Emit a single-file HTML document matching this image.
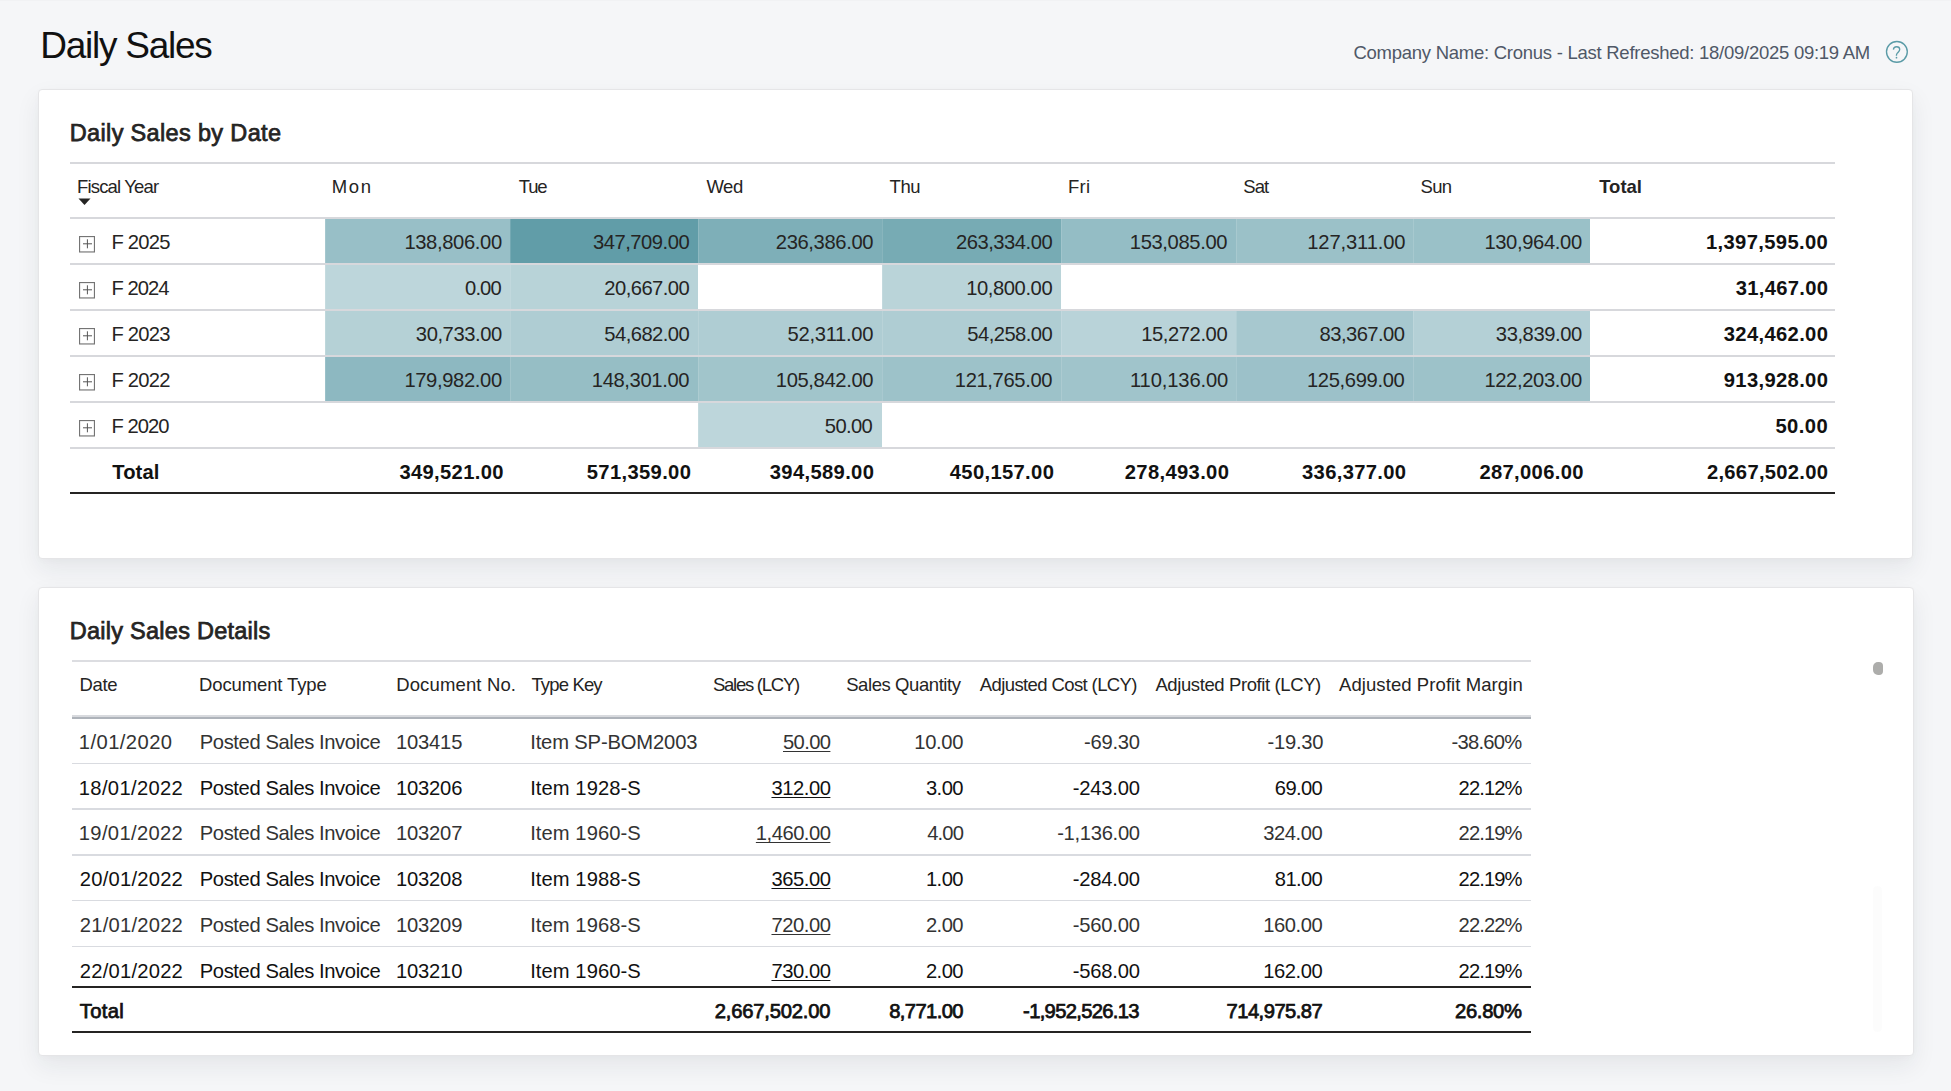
<!DOCTYPE html>
<html><head><meta charset="utf-8"><title>Daily Sales</title>
<style>
html,body{margin:0;padding:0;}
body{width:1951px;height:1091px;background:#f5f6f8;position:relative;overflow:hidden;font-family:"Liberation Sans",sans-serif;}
.t{position:absolute;line-height:0;white-space:nowrap;}
.r{position:absolute;}
.card{position:absolute;box-sizing:border-box;background:#fff;border:1px solid #e5e5e7;border-radius:4px;box-shadow:0 10px 24px rgba(30,35,50,0.075),0 2px 6px rgba(0,0,0,0.02);}
</style></head><body>
<div class="r" style="left:0.00px;top:0.00px;width:1951.00px;height:1.00px;background:rgba(0,0,0,0.015);"></div>
<svg class="r" style="left:1875px;top:35px;width:45px;height:35px" viewBox="0 0 45 35"><circle cx="21.9" cy="16.85" r="10.4" fill="none" stroke="#5a9ba7" stroke-width="1.35"/><path d="M18.4 14.6C18.5 12.7 19.9 11.7 21.6 11.7C23.4 11.7 24.7 12.9 24.7 14.5C24.7 16.1 23.5 16.8 22.5 17.9C21.7 18.8 21.4 19.5 21.4 20.7" fill="none" stroke="#5a9ba7" stroke-width="1.35"/><circle cx="21.5" cy="22.7" r="0.85" fill="#5a9ba7"/></svg>
<div class="card" style="left:38px;top:89px;width:1875px;height:470px"></div>
<div class="card" style="left:38px;top:587px;width:1876px;height:469px"></div>
<div class="r" style="left:70.00px;top:162.00px;width:1765.00px;height:2.00px;background:#d7d8dc;"></div>
<div class="r" style="left:70.00px;top:217.00px;width:1765.00px;height:2.00px;background:#d7d8dc;"></div>
<svg class="r" style="left:78px;top:198px;width:13px;height:8px" viewBox="0 0 13 8"><path d="M0.5 0.5h12L6.5 7z" fill="#252423"/></svg>
<div class="r" style="left:325.00px;top:219.00px;width:185.40px;height:44.00px;background:#98bfc7;box-shadow:inset 1px 0 0 rgba(255,255,255,0.13)"></div>
<div class="r" style="left:510.40px;top:219.00px;width:187.60px;height:44.00px;background:#619da8;box-shadow:inset 1px 0 0 rgba(255,255,255,0.13)"></div>
<div class="r" style="left:698.00px;top:219.00px;width:183.50px;height:44.00px;background:#7eafb8;box-shadow:inset 1px 0 0 rgba(255,255,255,0.13)"></div>
<div class="r" style="left:881.50px;top:219.00px;width:179.50px;height:44.00px;background:#77abb4;box-shadow:inset 1px 0 0 rgba(255,255,255,0.13)"></div>
<div class="r" style="left:1061.00px;top:219.00px;width:175.00px;height:44.00px;background:#94bdc5;box-shadow:inset 1px 0 0 rgba(255,255,255,0.13)"></div>
<div class="r" style="left:1236.00px;top:219.00px;width:177.30px;height:44.00px;background:#9bc1c8;box-shadow:inset 1px 0 0 rgba(255,255,255,0.13)"></div>
<div class="r" style="left:1413.30px;top:219.00px;width:177.10px;height:44.00px;background:#9ac1c8;box-shadow:inset 1px 0 0 rgba(255,255,255,0.13)"></div>
<div class="r" style="left:70.00px;top:263.00px;width:1765.00px;height:2.00px;background:#d7d8dc;"></div>
<svg class="r" style="left:79px;top:236.00px;width:16px;height:17px" viewBox="0 0 16 17"><rect x="0.55" y="0.55" width="14.9" height="15.4" fill="none" stroke="#747474" stroke-width="1.15"/><path d="M4 7.8h9M8.4 3.3v9" stroke="#555555" stroke-width="1"/></svg>
<div class="r" style="left:325.00px;top:265.00px;width:185.40px;height:44.00px;background:#bdd6db;box-shadow:inset 1px 0 0 rgba(255,255,255,0.13)"></div>
<div class="r" style="left:510.40px;top:265.00px;width:187.60px;height:44.00px;background:#b8d3d8;box-shadow:inset 1px 0 0 rgba(255,255,255,0.13)"></div>
<div class="r" style="left:881.50px;top:265.00px;width:179.50px;height:44.00px;background:#bad4d9;box-shadow:inset 1px 0 0 rgba(255,255,255,0.13)"></div>
<div class="r" style="left:70.00px;top:309.00px;width:1765.00px;height:2.00px;background:#d7d8dc;"></div>
<svg class="r" style="left:79px;top:282.00px;width:16px;height:17px" viewBox="0 0 16 17"><rect x="0.55" y="0.55" width="14.9" height="15.4" fill="none" stroke="#747474" stroke-width="1.15"/><path d="M4 7.8h9M8.4 3.3v9" stroke="#555555" stroke-width="1"/></svg>
<div class="r" style="left:325.00px;top:311.00px;width:185.40px;height:44.00px;background:#b5d1d6;box-shadow:inset 1px 0 0 rgba(255,255,255,0.13)"></div>
<div class="r" style="left:510.40px;top:311.00px;width:187.60px;height:44.00px;background:#afcdd3;box-shadow:inset 1px 0 0 rgba(255,255,255,0.13)"></div>
<div class="r" style="left:698.00px;top:311.00px;width:183.50px;height:44.00px;background:#afcdd3;box-shadow:inset 1px 0 0 rgba(255,255,255,0.13)"></div>
<div class="r" style="left:881.50px;top:311.00px;width:179.50px;height:44.00px;background:#afcdd3;box-shadow:inset 1px 0 0 rgba(255,255,255,0.13)"></div>
<div class="r" style="left:1061.00px;top:311.00px;width:175.00px;height:44.00px;background:#b9d3d9;box-shadow:inset 1px 0 0 rgba(255,255,255,0.13)"></div>
<div class="r" style="left:1236.00px;top:311.00px;width:177.30px;height:44.00px;background:#a7c8cf;box-shadow:inset 1px 0 0 rgba(255,255,255,0.13)"></div>
<div class="r" style="left:1413.30px;top:311.00px;width:177.10px;height:44.00px;background:#b4d0d6;box-shadow:inset 1px 0 0 rgba(255,255,255,0.13)"></div>
<div class="r" style="left:70.00px;top:355.00px;width:1765.00px;height:2.00px;background:#d7d8dc;"></div>
<svg class="r" style="left:79px;top:328.00px;width:16px;height:17px" viewBox="0 0 16 17"><rect x="0.55" y="0.55" width="14.9" height="15.4" fill="none" stroke="#747474" stroke-width="1.15"/><path d="M4 7.8h9M8.4 3.3v9" stroke="#555555" stroke-width="1"/></svg>
<div class="r" style="left:325.00px;top:357.00px;width:185.40px;height:44.00px;background:#8db8c1;box-shadow:inset 1px 0 0 rgba(255,255,255,0.13)"></div>
<div class="r" style="left:510.40px;top:357.00px;width:187.60px;height:44.00px;background:#96bec5;box-shadow:inset 1px 0 0 rgba(255,255,255,0.13)"></div>
<div class="r" style="left:698.00px;top:357.00px;width:183.50px;height:44.00px;background:#a1c5cb;box-shadow:inset 1px 0 0 rgba(255,255,255,0.13)"></div>
<div class="r" style="left:881.50px;top:357.00px;width:179.50px;height:44.00px;background:#9dc2c9;box-shadow:inset 1px 0 0 rgba(255,255,255,0.13)"></div>
<div class="r" style="left:1061.00px;top:357.00px;width:175.00px;height:44.00px;background:#a0c4cb;box-shadow:inset 1px 0 0 rgba(255,255,255,0.13)"></div>
<div class="r" style="left:1236.00px;top:357.00px;width:177.30px;height:44.00px;background:#9cc1c9;box-shadow:inset 1px 0 0 rgba(255,255,255,0.13)"></div>
<div class="r" style="left:1413.30px;top:357.00px;width:177.10px;height:44.00px;background:#9dc2c9;box-shadow:inset 1px 0 0 rgba(255,255,255,0.13)"></div>
<div class="r" style="left:70.00px;top:401.00px;width:1765.00px;height:2.00px;background:#d7d8dc;"></div>
<svg class="r" style="left:79px;top:374.00px;width:16px;height:17px" viewBox="0 0 16 17"><rect x="0.55" y="0.55" width="14.9" height="15.4" fill="none" stroke="#747474" stroke-width="1.15"/><path d="M4 7.8h9M8.4 3.3v9" stroke="#555555" stroke-width="1"/></svg>
<div class="r" style="left:698.00px;top:403.00px;width:183.50px;height:44.00px;background:#bdd6db;box-shadow:inset 1px 0 0 rgba(255,255,255,0.13)"></div>
<div class="r" style="left:70.00px;top:447.00px;width:1765.00px;height:2.00px;background:#d7d8dc;"></div>
<svg class="r" style="left:79px;top:420.00px;width:16px;height:17px" viewBox="0 0 16 17"><rect x="0.55" y="0.55" width="14.9" height="15.4" fill="none" stroke="#747474" stroke-width="1.15"/><path d="M4 7.8h9M8.4 3.3v9" stroke="#555555" stroke-width="1"/></svg>
<div class="r" style="left:70.00px;top:492.00px;width:1765.00px;height:2.00px;background:#252423;"></div>
<div class="r" style="left:72.00px;top:660.00px;width:1458.70px;height:2.00px;background:#dcdde1;"></div>
<div class="r" style="left:72.00px;top:715.00px;width:1458.70px;height:2.00px;background:#d8dade;"></div>
<div class="r" style="left:72.00px;top:717.00px;width:1458.70px;height:2.00px;background:#aeb3ba;"></div>
<div class="r" style="left:72.00px;top:762.75px;width:1458.70px;height:1.50px;background:#d9dbe0;"></div>
<div class="r" style="left:72.00px;top:808.45px;width:1458.70px;height:1.50px;background:#d9dbe0;"></div>
<div class="r" style="left:72.00px;top:854.15px;width:1458.70px;height:1.50px;background:#d9dbe0;"></div>
<div class="r" style="left:72.00px;top:899.85px;width:1458.70px;height:1.50px;background:#d9dbe0;"></div>
<div class="r" style="left:72.00px;top:945.55px;width:1458.70px;height:1.50px;background:#d9dbe0;"></div>
<div class="r" style="left:72.00px;top:986.00px;width:1458.70px;height:2.00px;background:#252423;"></div>
<div class="r" style="left:72.00px;top:1031.30px;width:1458.70px;height:1.80px;background:#252423;"></div>
<div class="r" style="left:1873px;top:886px;width:8.5px;height:146px;background:rgba(0,0,0,0.012);border-radius:4px"></div>
<div class="r" style="left:1873px;top:662px;width:10px;height:12.5px;background:#adadab;border-radius:5px 4px 4px 5px"></div>
<div class="t" style="top:45.88px;font-size:37px;color:#111111;letter-spacing:-1.240px;left:40.20px;"><span id="title">Daily Sales</span></div>
<div class="t" style="top:53.09px;font-size:18.5px;color:#4f5867;letter-spacing:-0.260px;right:81.00px;"><span id="company">Company Name: Cronus - Last Refreshed: 18/09/2025 09:19 AM</span></div>
<div class="t" style="top:132.66px;font-size:23.5px;color:#252423;letter-spacing:0.341px;-webkit-text-stroke:0.75px #252423;left:69.80px;"><span id="c1title">Daily Sales by Date</span></div>
<div class="t" style="top:186.59px;font-size:18.5px;color:#252423;letter-spacing:-0.830px;left:77.00px;"><span id="h1_0">Fiscal Year</span></div>
<div class="t" style="top:186.59px;font-size:18.5px;color:#252423;letter-spacing:1.600px;left:331.80px;"><span id="h1_1">Mon</span></div>
<div class="t" style="top:186.59px;font-size:18.5px;color:#252423;letter-spacing:-1.200px;left:518.80px;"><span id="h1_2">Tue</span></div>
<div class="t" style="top:186.59px;font-size:18.5px;color:#252423;letter-spacing:-0.450px;left:706.40px;"><span id="h1_3">Wed</span></div>
<div class="t" style="top:186.59px;font-size:18.5px;color:#252423;letter-spacing:-0.500px;left:889.60px;"><span id="h1_4">Thu</span></div>
<div class="t" style="top:186.59px;font-size:18.5px;color:#252423;letter-spacing:0.250px;left:1068.00px;"><span id="h1_5">Fri</span></div>
<div class="t" style="top:186.59px;font-size:18.5px;color:#252423;letter-spacing:-0.900px;left:1243.20px;"><span id="h1_6">Sat</span></div>
<div class="t" style="top:186.59px;font-size:18.5px;color:#252423;letter-spacing:-0.700px;left:1420.60px;"><span id="h1_7">Sun</span></div>
<div class="t" style="top:186.59px;font-size:18.5px;color:#252423;letter-spacing:0.000px;font-weight:700;left:1599.20px;"><span id="h1_8">Total</span></div>
<div class="t" style="top:242.00px;font-size:20.2px;color:#252423;letter-spacing:-0.740px;left:111.40px;"><span id="y_0">F 2025</span></div>
<div class="t" style="top:242.00px;font-size:20.2px;color:#252423;letter-spacing:-0.362px;right:1449.20px;"><span id="d_0_0">138,806.00</span></div>
<div class="t" style="top:242.00px;font-size:20.2px;color:#252423;letter-spacing:-0.472px;right:1261.80px;"><span id="d_0_1">347,709.00</span></div>
<div class="t" style="top:242.00px;font-size:20.2px;color:#252423;letter-spacing:-0.361px;right:1077.80px;"><span id="d_0_2">236,386.00</span></div>
<div class="t" style="top:242.00px;font-size:20.2px;color:#252423;letter-spacing:-0.472px;right:898.80px;"><span id="d_0_3">263,334.00</span></div>
<div class="t" style="top:242.00px;font-size:20.2px;color:#252423;letter-spacing:-0.361px;right:723.80px;"><span id="d_0_4">153,085.00</span></div>
<div class="t" style="top:242.00px;font-size:20.2px;color:#252423;letter-spacing:-0.139px;right:545.60px;"><span id="d_0_5">127,311.00</span></div>
<div class="t" style="top:242.00px;font-size:20.2px;color:#252423;letter-spacing:-0.362px;right:369.20px;"><span id="d_0_6">130,964.00</span></div>
<div class="t" style="top:242.00px;font-size:20.2px;color:#111111;letter-spacing:0.370px;font-weight:700;right:122.80px;"><span id="d_0_7">1,397,595.00</span></div>
<div class="t" style="top:288.00px;font-size:20.2px;color:#252423;letter-spacing:-0.940px;left:111.40px;"><span id="y_1">F 2024</span></div>
<div class="t" style="top:288.00px;font-size:20.2px;color:#252423;letter-spacing:-0.884px;right:1450.20px;"><span id="d_1_0">0.00</span></div>
<div class="t" style="top:288.00px;font-size:20.2px;color:#252423;letter-spacing:-0.550px;right:1261.80px;"><span id="d_1_1">20,667.00</span></div>
<div class="t" style="top:288.00px;font-size:20.2px;color:#252423;letter-spacing:-0.425px;right:898.80px;"><span id="d_1_3">10,800.00</span></div>
<div class="t" style="top:288.00px;font-size:20.2px;color:#111111;letter-spacing:0.283px;font-weight:700;right:122.80px;"><span id="d_1_7">31,467.00</span></div>
<div class="t" style="top:334.00px;font-size:20.2px;color:#252423;letter-spacing:-0.740px;left:111.40px;"><span id="y_2">F 2023</span></div>
<div class="t" style="top:334.00px;font-size:20.2px;color:#252423;letter-spacing:-0.425px;right:1449.20px;"><span id="d_2_0">30,733.00</span></div>
<div class="t" style="top:334.00px;font-size:20.2px;color:#252423;letter-spacing:-0.550px;right:1261.80px;"><span id="d_2_1">54,682.00</span></div>
<div class="t" style="top:334.00px;font-size:20.2px;color:#252423;letter-spacing:-0.300px;right:1077.80px;"><span id="d_2_2">52,311.00</span></div>
<div class="t" style="top:334.00px;font-size:20.2px;color:#252423;letter-spacing:-0.550px;right:898.80px;"><span id="d_2_3">54,258.00</span></div>
<div class="t" style="top:334.00px;font-size:20.2px;color:#252423;letter-spacing:-0.425px;right:723.80px;"><span id="d_2_4">15,272.00</span></div>
<div class="t" style="top:334.00px;font-size:20.2px;color:#252423;letter-spacing:-0.550px;right:546.60px;"><span id="d_2_5">83,367.00</span></div>
<div class="t" style="top:334.00px;font-size:20.2px;color:#252423;letter-spacing:-0.425px;right:369.20px;"><span id="d_2_6">33,839.00</span></div>
<div class="t" style="top:334.00px;font-size:20.2px;color:#111111;letter-spacing:0.337px;font-weight:700;right:122.80px;"><span id="d_2_7">324,462.00</span></div>
<div class="t" style="top:380.00px;font-size:20.2px;color:#252423;letter-spacing:-0.740px;left:111.40px;"><span id="y_3">F 2022</span></div>
<div class="t" style="top:380.00px;font-size:20.2px;color:#252423;letter-spacing:-0.362px;right:1449.20px;"><span id="d_3_0">179,982.00</span></div>
<div class="t" style="top:380.00px;font-size:20.2px;color:#252423;letter-spacing:-0.361px;right:1261.80px;"><span id="d_3_1">148,301.00</span></div>
<div class="t" style="top:380.00px;font-size:20.2px;color:#252423;letter-spacing:-0.361px;right:1077.80px;"><span id="d_3_2">105,842.00</span></div>
<div class="t" style="top:380.00px;font-size:20.2px;color:#252423;letter-spacing:-0.361px;right:898.80px;"><span id="d_3_3">121,765.00</span></div>
<div class="t" style="top:380.00px;font-size:20.2px;color:#252423;letter-spacing:-0.137px;right:722.80px;"><span id="d_3_4">110,136.00</span></div>
<div class="t" style="top:380.00px;font-size:20.2px;color:#252423;letter-spacing:-0.361px;right:546.60px;"><span id="d_3_5">125,699.00</span></div>
<div class="t" style="top:380.00px;font-size:20.2px;color:#252423;letter-spacing:-0.362px;right:369.20px;"><span id="d_3_6">122,203.00</span></div>
<div class="t" style="top:380.00px;font-size:20.2px;color:#111111;letter-spacing:0.337px;font-weight:700;right:122.80px;"><span id="d_3_7">913,928.00</span></div>
<div class="t" style="top:426.00px;font-size:20.2px;color:#252423;letter-spacing:-0.940px;left:111.40px;"><span id="y_4">F 2020</span></div>
<div class="t" style="top:426.00px;font-size:20.2px;color:#252423;letter-spacing:-0.625px;right:1078.80px;"><span id="d_4_2">50.00</span></div>
<div class="t" style="top:426.00px;font-size:20.2px;color:#111111;letter-spacing:0.450px;font-weight:700;right:122.80px;"><span id="d_4_7">50.00</span></div>
<div class="t" style="top:472.00px;font-size:20.2px;color:#111111;letter-spacing:0.125px;font-weight:700;left:112.20px;"><span id="tot1">Total</span></div>
<div class="t" style="top:472.00px;font-size:20.2px;color:#111111;letter-spacing:0.337px;font-weight:700;right:1447.20px;"><span id="t1_0">349,521.00</span></div>
<div class="t" style="top:472.00px;font-size:20.2px;color:#111111;letter-spacing:0.337px;font-weight:700;right:1259.80px;"><span id="t1_1">571,359.00</span></div>
<div class="t" style="top:472.00px;font-size:20.2px;color:#111111;letter-spacing:0.337px;font-weight:700;right:1076.80px;"><span id="t1_2">394,589.00</span></div>
<div class="t" style="top:472.00px;font-size:20.2px;color:#111111;letter-spacing:0.336px;font-weight:700;right:896.80px;"><span id="t1_3">450,157.00</span></div>
<div class="t" style="top:472.00px;font-size:20.2px;color:#111111;letter-spacing:0.337px;font-weight:700;right:721.80px;"><span id="t1_4">278,493.00</span></div>
<div class="t" style="top:472.00px;font-size:20.2px;color:#111111;letter-spacing:0.337px;font-weight:700;right:544.60px;"><span id="t1_5">336,377.00</span></div>
<div class="t" style="top:472.00px;font-size:20.2px;color:#111111;letter-spacing:0.337px;font-weight:700;right:367.20px;"><span id="t1_6">287,006.00</span></div>
<div class="t" style="top:472.00px;font-size:20.2px;color:#111111;letter-spacing:0.279px;font-weight:700;right:122.80px;"><span id="t1_7">2,667,502.00</span></div>
<div class="t" style="top:630.86px;font-size:23.5px;color:#252423;letter-spacing:0.256px;-webkit-text-stroke:0.75px #252423;left:69.80px;"><span id="c2title">Daily Sales Details</span></div>
<div class="t" style="top:684.59px;font-size:18.5px;color:#252423;letter-spacing:-0.269px;left:79.40px;"><span id="h2_0">Date</span></div>
<div class="t" style="top:684.59px;font-size:18.5px;color:#252423;letter-spacing:-0.125px;left:199.00px;"><span id="h2_1">Document Type</span></div>
<div class="t" style="top:684.59px;font-size:18.5px;color:#252423;letter-spacing:0.143px;left:396.20px;"><span id="h2_2">Document No.</span></div>
<div class="t" style="top:684.59px;font-size:18.5px;color:#252423;letter-spacing:-0.844px;left:531.40px;"><span id="h2_3">Type Key</span></div>
<div class="t" style="top:684.59px;font-size:18.5px;color:#252423;letter-spacing:-1.260px;left:713.00px;"><span id="h2_4">Sales (LCY)</span></div>
<div class="t" style="top:684.59px;font-size:18.5px;color:#252423;letter-spacing:-0.423px;left:846.20px;"><span id="h2_5">Sales Quantity</span></div>
<div class="t" style="top:684.59px;font-size:18.5px;color:#252423;letter-spacing:-0.608px;left:979.80px;"><span id="h2_6">Adjusted Cost (LCY)</span></div>
<div class="t" style="top:684.59px;font-size:18.5px;color:#252423;letter-spacing:-0.395px;left:1155.40px;"><span id="h2_7">Adjusted Profit (LCY)</span></div>
<div class="t" style="top:684.59px;font-size:18.5px;color:#252423;letter-spacing:0.081px;left:1339.00px;"><span id="h2_8">Adjusted Profit Margin</span></div>
<div class="t" style="top:742.00px;font-size:20.2px;color:#333333;letter-spacing:0.425px;left:78.80px;"><span id="r2_0_0">1/01/2020</span></div>
<div class="t" style="top:742.00px;font-size:20.2px;color:#333333;letter-spacing:-0.405px;left:199.80px;"><span id="r2_0_1">Posted Sales Invoice</span></div>
<div class="t" style="top:742.00px;font-size:20.2px;color:#333333;letter-spacing:-0.200px;left:396.00px;"><span id="r2_0_2">103415</span></div>
<div class="t" style="top:742.00px;font-size:20.2px;color:#333333;letter-spacing:-0.154px;left:530.20px;"><span id="r2_0_3">Item SP-BOM2003</span></div>
<div class="t" style="top:742.00px;font-size:20.2px;color:#333333;letter-spacing:-0.625px;right:1120.60px;text-decoration:underline;text-underline-offset:2px;text-decoration-thickness:1px;"><span id="v2_0_0">50.00</span></div>
<div class="t" style="top:742.00px;font-size:20.2px;color:#333333;letter-spacing:-0.375px;right:988.00px;"><span id="v2_0_1">10.00</span></div>
<div class="t" style="top:742.00px;font-size:20.2px;color:#333333;letter-spacing:-0.250px;right:811.20px;"><span id="v2_0_2">-69.30</span></div>
<div class="t" style="top:742.00px;font-size:20.2px;color:#333333;letter-spacing:-0.250px;right:627.80px;"><span id="v2_0_3">-19.30</span></div>
<div class="t" style="top:742.00px;font-size:20.2px;color:#333333;letter-spacing:-0.715px;right:429.40px;"><span id="v2_0_4">-38.60%</span></div>
<div class="t" style="top:787.70px;font-size:20.2px;color:#111111;letter-spacing:0.333px;left:78.80px;"><span id="r2_1_0">18/01/2022</span></div>
<div class="t" style="top:787.70px;font-size:20.2px;color:#111111;letter-spacing:-0.405px;left:199.80px;"><span id="r2_1_1">Posted Sales Invoice</span></div>
<div class="t" style="top:787.70px;font-size:20.2px;color:#111111;letter-spacing:-0.200px;left:396.00px;"><span id="r2_1_2">103206</span></div>
<div class="t" style="top:787.70px;font-size:20.2px;color:#111111;letter-spacing:0.060px;left:530.20px;"><span id="r2_1_3">Item 1928-S</span></div>
<div class="t" style="top:787.70px;font-size:20.2px;color:#111111;letter-spacing:-0.470px;right:1120.60px;text-decoration:underline;text-underline-offset:2px;text-decoration-thickness:1px;"><span id="v2_1_0">312.00</span></div>
<div class="t" style="top:787.70px;font-size:20.2px;color:#111111;letter-spacing:-0.552px;right:988.00px;"><span id="v2_1_1">3.00</span></div>
<div class="t" style="top:787.70px;font-size:20.2px;color:#111111;letter-spacing:-0.185px;right:811.20px;"><span id="v2_1_2">-243.00</span></div>
<div class="t" style="top:787.70px;font-size:20.2px;color:#111111;letter-spacing:-0.625px;right:628.80px;"><span id="v2_1_3">69.00</span></div>
<div class="t" style="top:787.70px;font-size:20.2px;color:#111111;letter-spacing:-0.910px;right:429.40px;"><span id="v2_1_4">22.12%</span></div>
<div class="t" style="top:833.40px;font-size:20.2px;color:#333333;letter-spacing:0.333px;left:78.80px;"><span id="r2_2_0">19/01/2022</span></div>
<div class="t" style="top:833.40px;font-size:20.2px;color:#333333;letter-spacing:-0.405px;left:199.80px;"><span id="r2_2_1">Posted Sales Invoice</span></div>
<div class="t" style="top:833.40px;font-size:20.2px;color:#333333;letter-spacing:-0.200px;left:396.00px;"><span id="r2_2_2">103207</span></div>
<div class="t" style="top:833.40px;font-size:20.2px;color:#333333;letter-spacing:0.060px;left:530.20px;"><span id="r2_2_3">Item 1960-S</span></div>
<div class="t" style="top:833.40px;font-size:20.2px;color:#333333;letter-spacing:-0.506px;right:1120.60px;text-decoration:underline;text-underline-offset:2px;text-decoration-thickness:1px;"><span id="v2_2_0">1,460.00</span></div>
<div class="t" style="top:833.40px;font-size:20.2px;color:#333333;letter-spacing:-0.885px;right:988.00px;"><span id="v2_2_1">4.00</span></div>
<div class="t" style="top:833.40px;font-size:20.2px;color:#333333;letter-spacing:-0.292px;right:811.20px;"><span id="v2_2_2">-1,136.00</span></div>
<div class="t" style="top:833.40px;font-size:20.2px;color:#333333;letter-spacing:-0.470px;right:628.80px;"><span id="v2_2_3">324.00</span></div>
<div class="t" style="top:833.40px;font-size:20.2px;color:#333333;letter-spacing:-0.910px;right:429.40px;"><span id="v2_2_4">22.19%</span></div>
<div class="t" style="top:879.10px;font-size:20.2px;color:#111111;letter-spacing:0.222px;left:79.80px;"><span id="r2_3_0">20/01/2022</span></div>
<div class="t" style="top:879.10px;font-size:20.2px;color:#111111;letter-spacing:-0.405px;left:199.80px;"><span id="r2_3_1">Posted Sales Invoice</span></div>
<div class="t" style="top:879.10px;font-size:20.2px;color:#111111;letter-spacing:-0.200px;left:396.00px;"><span id="r2_3_2">103208</span></div>
<div class="t" style="top:879.10px;font-size:20.2px;color:#111111;letter-spacing:0.060px;left:530.20px;"><span id="r2_3_3">Item 1988-S</span></div>
<div class="t" style="top:879.10px;font-size:20.2px;color:#111111;letter-spacing:-0.470px;right:1120.60px;text-decoration:underline;text-underline-offset:2px;text-decoration-thickness:1px;"><span id="v2_3_0">365.00</span></div>
<div class="t" style="top:879.10px;font-size:20.2px;color:#111111;letter-spacing:-0.552px;right:988.00px;"><span id="v2_3_1">1.00</span></div>
<div class="t" style="top:879.10px;font-size:20.2px;color:#111111;letter-spacing:-0.185px;right:811.20px;"><span id="v2_3_2">-284.00</span></div>
<div class="t" style="top:879.10px;font-size:20.2px;color:#111111;letter-spacing:-0.625px;right:628.80px;"><span id="v2_3_3">81.00</span></div>
<div class="t" style="top:879.10px;font-size:20.2px;color:#111111;letter-spacing:-0.910px;right:429.40px;"><span id="v2_3_4">22.19%</span></div>
<div class="t" style="top:924.80px;font-size:20.2px;color:#333333;letter-spacing:0.222px;left:79.80px;"><span id="r2_4_0">21/01/2022</span></div>
<div class="t" style="top:924.80px;font-size:20.2px;color:#333333;letter-spacing:-0.405px;left:199.80px;"><span id="r2_4_1">Posted Sales Invoice</span></div>
<div class="t" style="top:924.80px;font-size:20.2px;color:#333333;letter-spacing:-0.200px;left:396.00px;"><span id="r2_4_2">103209</span></div>
<div class="t" style="top:924.80px;font-size:20.2px;color:#333333;letter-spacing:0.060px;left:530.20px;"><span id="r2_4_3">Item 1968-S</span></div>
<div class="t" style="top:924.80px;font-size:20.2px;color:#333333;letter-spacing:-0.470px;right:1120.60px;text-decoration:underline;text-underline-offset:2px;text-decoration-thickness:1px;"><span id="v2_4_0">720.00</span></div>
<div class="t" style="top:924.80px;font-size:20.2px;color:#333333;letter-spacing:-0.552px;right:988.00px;"><span id="v2_4_1">2.00</span></div>
<div class="t" style="top:924.80px;font-size:20.2px;color:#333333;letter-spacing:-0.185px;right:811.20px;"><span id="v2_4_2">-560.00</span></div>
<div class="t" style="top:924.80px;font-size:20.2px;color:#333333;letter-spacing:-0.470px;right:628.80px;"><span id="v2_4_3">160.00</span></div>
<div class="t" style="top:924.80px;font-size:20.2px;color:#333333;letter-spacing:-0.910px;right:429.40px;"><span id="v2_4_4">22.22%</span></div>
<div class="t" style="top:970.50px;font-size:20.2px;color:#111111;letter-spacing:0.222px;left:79.80px;"><span id="r2_5_0">22/01/2022</span></div>
<div class="t" style="top:970.50px;font-size:20.2px;color:#111111;letter-spacing:-0.405px;left:199.80px;"><span id="r2_5_1">Posted Sales Invoice</span></div>
<div class="t" style="top:970.50px;font-size:20.2px;color:#111111;letter-spacing:-0.200px;left:396.00px;"><span id="r2_5_2">103210</span></div>
<div class="t" style="top:970.50px;font-size:20.2px;color:#111111;letter-spacing:0.060px;left:530.20px;"><span id="r2_5_3">Item 1960-S</span></div>
<div class="t" style="top:970.50px;font-size:20.2px;color:#111111;letter-spacing:-0.470px;right:1120.60px;text-decoration:underline;text-underline-offset:2px;text-decoration-thickness:1px;"><span id="v2_5_0">730.00</span></div>
<div class="t" style="top:970.50px;font-size:20.2px;color:#111111;letter-spacing:-0.552px;right:988.00px;"><span id="v2_5_1">2.00</span></div>
<div class="t" style="top:970.50px;font-size:20.2px;color:#111111;letter-spacing:-0.185px;right:811.20px;"><span id="v2_5_2">-568.00</span></div>
<div class="t" style="top:970.50px;font-size:20.2px;color:#111111;letter-spacing:-0.470px;right:628.80px;"><span id="v2_5_3">162.00</span></div>
<div class="t" style="top:970.50px;font-size:20.2px;color:#111111;letter-spacing:-0.910px;right:429.40px;"><span id="v2_5_4">22.19%</span></div>
<div class="t" style="top:1011.00px;font-size:20.2px;color:#111111;letter-spacing:0.325px;-webkit-text-stroke:0.75px #111111;left:79.80px;"><span id="tot2">Total</span></div>
<div class="t" style="top:1011.00px;font-size:20.2px;color:#111111;letter-spacing:-0.182px;-webkit-text-stroke:0.75px #111111;right:1120.60px;"><span id="t2_0">2,667,502.00</span></div>
<div class="t" style="top:1011.00px;font-size:20.2px;color:#111111;letter-spacing:-0.598px;-webkit-text-stroke:0.75px #111111;right:988.00px;"><span id="t2_1">8,771.00</span></div>
<div class="t" style="top:1011.00px;font-size:20.2px;color:#111111;letter-spacing:-0.683px;-webkit-text-stroke:0.75px #111111;right:812.20px;"><span id="t2_2">-1,952,526.13</span></div>
<div class="t" style="top:1011.00px;font-size:20.2px;color:#111111;letter-spacing:-0.541px;-webkit-text-stroke:0.75px #111111;right:628.80px;"><span id="t2_3">714,975.87</span></div>
<div class="t" style="top:1011.00px;font-size:20.2px;color:#111111;letter-spacing:-0.320px;-webkit-text-stroke:0.75px #111111;right:429.40px;"><span id="t2_4">26.80%</span></div>
</body></html>
